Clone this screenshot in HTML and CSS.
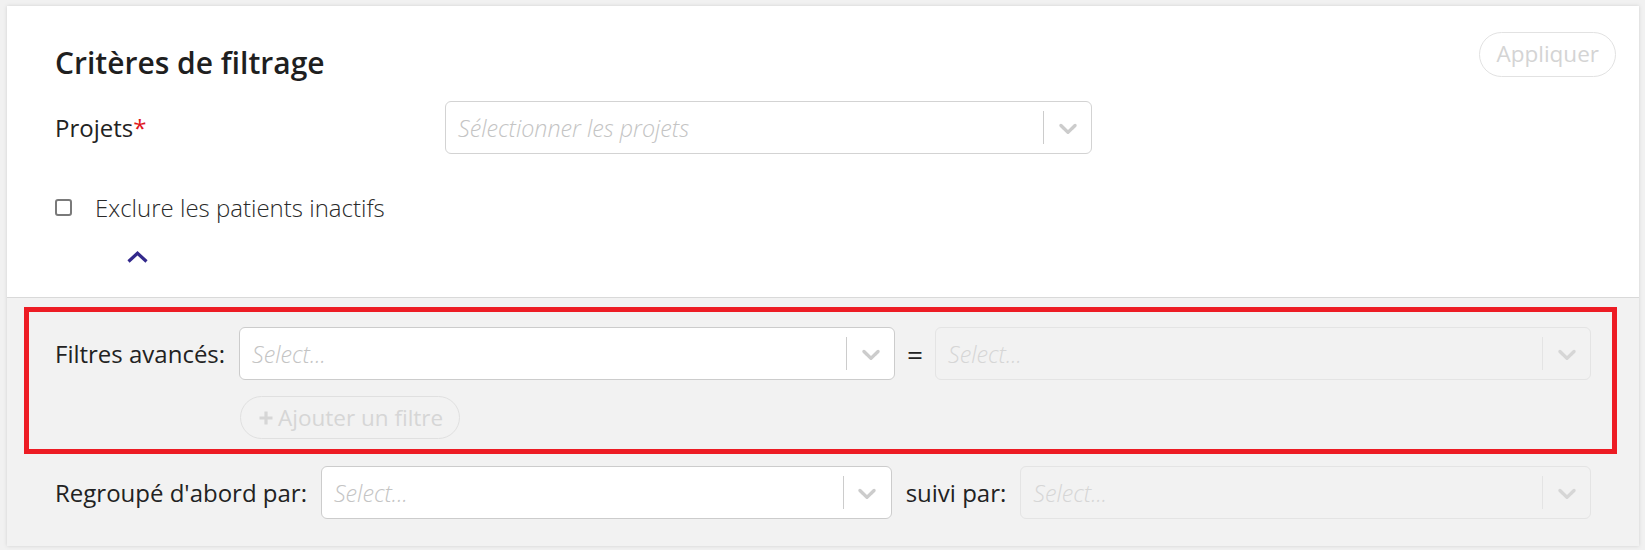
FILE: index.html
```html
<!DOCTYPE html>
<html lang="fr">
<head>
<meta charset="utf-8">
<title>Critères de filtrage</title>
<link rel="stylesheet" href="styles.css">
</head>
<body>
<div class="card">
  <div class="top">
    <div class="head">
      <h2 class="title">Critères de filtrage</h2>
      <button class="apply" disabled>Appliquer</button>
    </div>
    <div class="field-row">
      <label class="field-label">Projets<span class="req">*</span></label>
      <div class="select select-project">
        <div class="value"><span class="placeholder">Sélectionner les projets</span></div>
        <div class="indicators"><span class="sep"></span><span class="dd"><svg viewBox="0 0 20 20" width="30" height="30"><path d="M4.516 7.548c0.436-0.446 1.043-0.481 1.576 0l3.908 3.747 3.908-3.747c0.533-0.481 1.141-0.446 1.574 0 0.436 0.445 0.408 1.197 0 1.615-0.406 0.418-4.695 4.502-4.695 4.502-0.217 0.223-0.502 0.335-0.787 0.335s-0.57-0.112-0.789-0.335c0 0-4.287-4.084-4.695-4.502s-0.436-1.17 0-1.615z"/></svg></span></div>
      </div>
    </div>
    <label class="check-row"><input type="checkbox" class="check"><span class="check-text">Exclure les patients inactifs</span></label>
    <div class="collapse">
      <svg class="chev-up" viewBox="0 0 21 12" width="21" height="12"><polyline points="1.5,10.5 10.5,2.2 19.5,10.5"/></svg>
    </div>
  </div>
  <div class="advanced">
    <div class="highlight">
      <div class="row">
        <span class="row-label">Filtres avancés:</span>
        <div class="select">
          <div class="value"><span class="placeholder">Select...</span></div>
          <div class="indicators"><span class="sep"></span><span class="dd"><svg viewBox="0 0 20 20" width="30" height="30"><path d="M4.516 7.548c0.436-0.446 1.043-0.481 1.576 0l3.908 3.747 3.908-3.747c0.533-0.481 1.141-0.446 1.574 0 0.436 0.445 0.408 1.197 0 1.615-0.406 0.418-4.695 4.502-4.695 4.502-0.217 0.223-0.502 0.335-0.787 0.335s-0.57-0.112-0.789-0.335c0 0-4.287-4.084-4.695-4.502s-0.436-1.17 0-1.615z"/></svg></span></div>
        </div>
        <span class="eq">=</span>
        <div class="select disabled">
          <div class="value"><span class="placeholder">Select...</span></div>
          <div class="indicators"><span class="sep"></span><span class="dd"><svg viewBox="0 0 20 20" width="30" height="30"><path d="M4.516 7.548c0.436-0.446 1.043-0.481 1.576 0l3.908 3.747 3.908-3.747c0.533-0.481 1.141-0.446 1.574 0 0.436 0.445 0.408 1.197 0 1.615-0.406 0.418-4.695 4.502-4.695 4.502-0.217 0.223-0.502 0.335-0.787 0.335s-0.57-0.112-0.789-0.335c0 0-4.287-4.084-4.695-4.502s-0.436-1.17 0-1.615z"/></svg></span></div>
        </div>
      </div>
      <div class="add-row">
        <button class="add" disabled><svg class="plus" viewBox="0 0 16 16" width="16" height="16"><path d="M8 1.5v13M1.5 8h13"/></svg><span>Ajouter un filtre</span></button>
      </div>
    </div>
    <div class="row group-row">
      <span class="row-label">Regroupé d'abord par:</span>
      <div class="select">
        <div class="value"><span class="placeholder">Select...</span></div>
        <div class="indicators"><span class="sep"></span><span class="dd"><svg viewBox="0 0 20 20" width="30" height="30"><path d="M4.516 7.548c0.436-0.446 1.043-0.481 1.576 0l3.908 3.747 3.908-3.747c0.533-0.481 1.141-0.446 1.574 0 0.436 0.445 0.408 1.197 0 1.615-0.406 0.418-4.695 4.502-4.695 4.502-0.217 0.223-0.502 0.335-0.787 0.335s-0.57-0.112-0.789-0.335c0 0-4.287-4.084-4.695-4.502s-0.436-1.17 0-1.615z"/></svg></span></div>
      </div>
      <span class="row-label">suivi par:</span>
      <div class="select disabled">
        <div class="value"><span class="placeholder">Select...</span></div>
        <div class="indicators"><span class="sep"></span><span class="dd"><svg viewBox="0 0 20 20" width="30" height="30"><path d="M4.516 7.548c0.436-0.446 1.043-0.481 1.576 0l3.908 3.747 3.908-3.747c0.533-0.481 1.141-0.446 1.574 0 0.436 0.445 0.408 1.197 0 1.615-0.406 0.418-4.695 4.502-4.695 4.502-0.217 0.223-0.502 0.335-0.787 0.335s-0.57-0.112-0.789-0.335c0 0-4.287-4.084-4.695-4.502s-0.436-1.17 0-1.615z"/></svg></span></div>
      </div>
    </div>
  </div>
</div>
</body>
</html>
```

FILE: styles.css
```css
* { box-sizing: border-box; }

html, body {
  margin: 0;
  background: #f1f1f1;
}

body {
  padding: 6px 6px 5px 7px;
  font-family: "Open Sans", "Noto Sans", "Liberation Sans", sans-serif;
  font-size: 24px;
  color: #222;
}

.card {
  background: #fff;
  box-shadow: 0 0 4px rgba(0, 0, 0, 0.13);
}

.top {
  padding: 26px 23px 0 48px;
  height: 291px;
}

.head {
  display: flex;
  justify-content: space-between;
  align-items: flex-start;
}

.title {
  margin: 10px 0 0;
  font-size: 30px;
  line-height: 41px;
  font-weight: 600;
  color: #1f1f1f;
}

.apply {
  height: 45px;
  padding: 0 16px;
  border: 1px solid #e2e2e2;
  border-radius: 23px;
  background: #fff;
  font-family: inherit;
  font-size: 22.5px;
  color: #d4d4d4;
  line-height: 1;
}

.field-row {
  display: flex;
  align-items: center;
  margin-top: 18px;
}

.field-label {
  width: 390px;
  flex: none;
  line-height: 32px;
}

.req { color: #e0151b; }

.select {
  display: flex;
  align-items: stretch;
  height: 53px;
  border: 1px solid #cccccc;
  border-radius: 6px;
  background: #fff;
  flex: 1 1 0;
  min-width: 0;
}

.select-project {
  flex: none;
  width: 647px;
  border-color: #d3d3d3;
}

.value {
  flex: 1;
  display: flex;
  align-items: center;
  padding-left: 12px;
  overflow: hidden;
}

.placeholder {
  font-size: 23.3px;
  font-style: italic;
  font-weight: 300;
  color: #c4c4c4;
  white-space: nowrap;
}

.indicators {
  display: flex;
  align-items: stretch;
}

.sep {
  width: 1px;
  margin: 9px 0;
  background: #cccccc;
}

.dd {
  width: 47px;
  display: flex;
  align-items: center;
  justify-content: center;
}

.dd svg { fill: #cccccc; display: block; }

.select.disabled {
  background: #f2f2f2;
  border-color: #e4e4e4;
}

.select.disabled .sep { background: #e4e4e4; }
.select.disabled .placeholder { color: #d6d6d6; }
.select.disabled .dd svg { fill: #d6d6d6; }

.check-row {
  display: flex;
  align-items: center;
  margin-top: 38px;
  line-height: 31px;
}

.check {
  appearance: none;
  -webkit-appearance: none;
  width: 17px;
  height: 17px;
  margin: 0 23px 0 0;
  border: 2px solid #7a7a7a;
  border-radius: 3px;
  background: #fff;
  flex: none;
}

.check-text {
  font-weight: 300;
  color: #2a2a2a;
}

.collapse {
  margin-top: 28px;
  padding-left: 72px;
  height: 12px;
}

.chev-up {
  display: block;
  fill: none;
  stroke: #33298c;
  stroke-width: 3.2;
}

.advanced {
  border-top: 1px solid #d9d9d9;
  background: #f2f2f2;
  padding: 9px 22px 27px 17px;
}

.highlight {
  border: 5px solid #ed1c24;
  padding: 15px 21px 10px 26px;
}

.row {
  display: flex;
  align-items: center;
  gap: 14px;
}

.row-label {
  flex: none;
  line-height: 32px;
  white-space: nowrap;
}

.eq {
  flex: none;
  line-height: 32px;
  font-size: 28px;
  margin: 0 -2px;
}

.add-row {
  margin-top: 16px;
  padding-left: 185px;
}

.add {
  display: inline-flex;
  align-items: center;
  gap: 4px;
  height: 43px;
  padding: 0 16px 0 17px;
  border: 1px solid #e0e0e0;
  border-radius: 22px;
  background: transparent;
  font-family: inherit;
  font-size: 22.5px;
  color: #d6d6d6;
}

.plus {
  display: block;
  fill: none;
  stroke: #d6d6d6;
  stroke-width: 3.2;
}

.group-row {
  margin-top: 12px;
  padding: 0 26px 0 31px;
}
```
